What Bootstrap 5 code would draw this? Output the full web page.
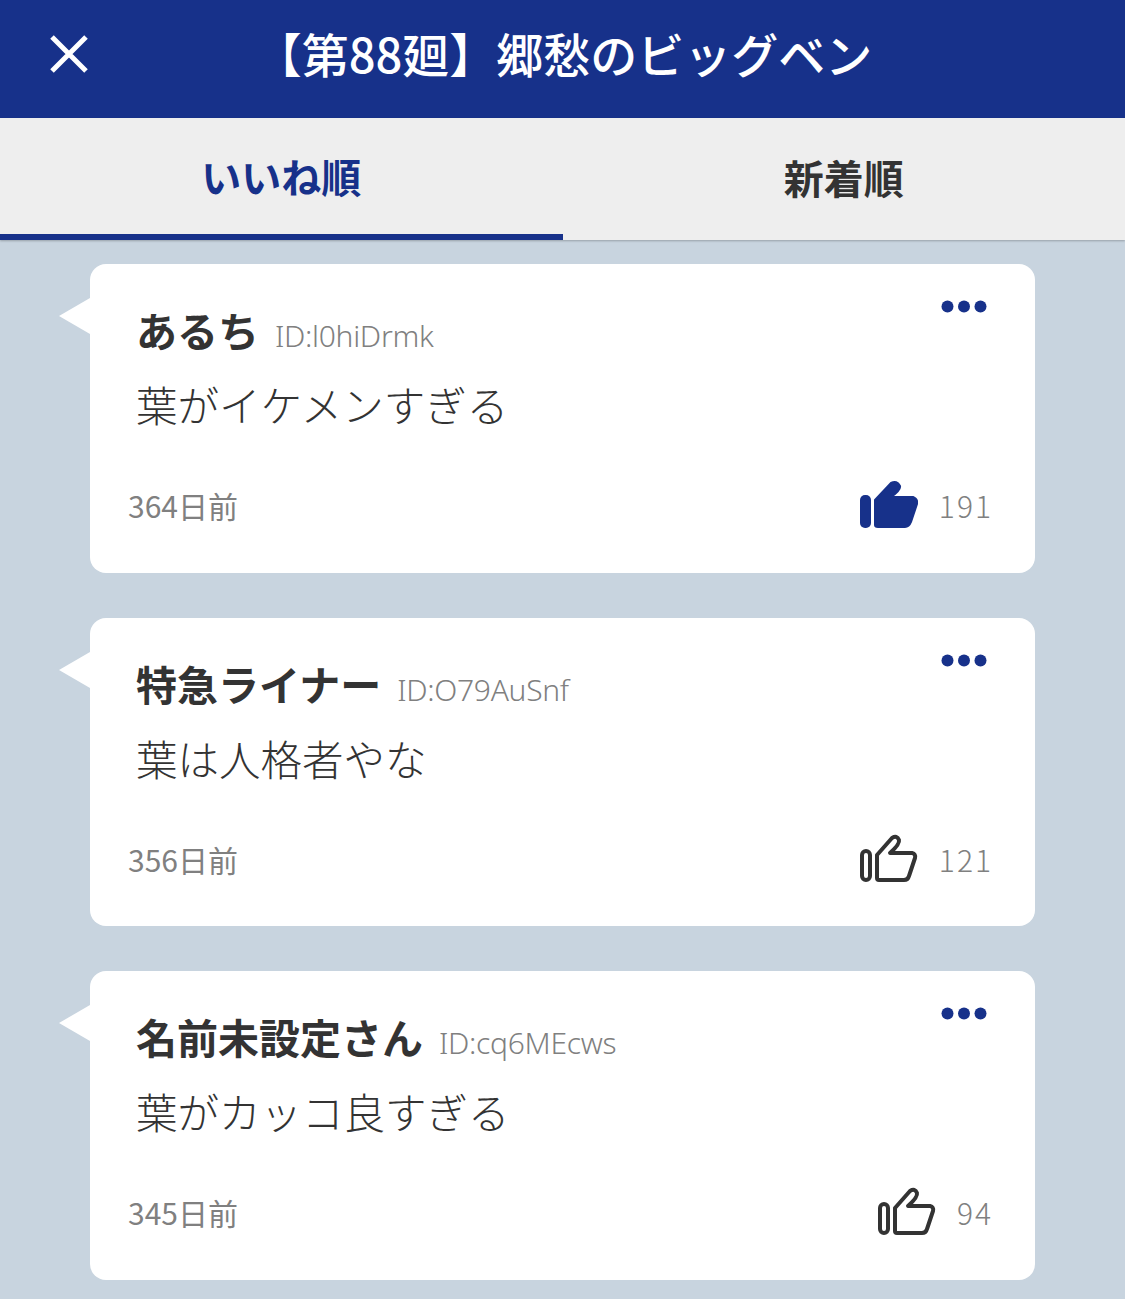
<!DOCTYPE html>
<html lang="ja">
  <head>
    <meta charset="UTF-8" />
    <meta name="viewport" content="width=device-width, initial-scale=1.0" />
    <title>コメント</title>
    <link href="https://cdn.jsdelivr.net/npm/bootstrap@5.3.0/dist/css/bootstrap.min.css" rel="stylesheet" />
    <style>
      body {
        background-color: #c8d4df;
        font-family: "Noto Sans CJK JP", "Noto Sans", sans-serif;
        color: #333;
        overflow: hidden;
      }
      .top-bar {
        height: 118px;
        background-color: #17318a;
        color: #fff;
      }
      .close-btn {
        left: 50px;
        top: 35px;
        width: 38px;
        height: 38px;
      }
      .top-title {
        font-size: 47px;
        font-weight: 500;
        line-height: 1;
        padding-left: 2px;
        padding-bottom: 14px;
      }
      .tab-row {
        height: 122px;
        margin-bottom: -2px;
        background-color: #eee;
        box-shadow: 0 1px 2px rgba(0, 0, 0, 0.25);
      }
      .tab-item {
        font-size: 40px;
        font-weight: 700;
        color: #333;
        padding-bottom: 4px;
      }
      .tab-item.active-tab {
        color: #17318a;
        border-bottom: 6px solid #17318a;
        padding-bottom: 0;
      }
      .comment-list {
        padding: 26px 90px 0;
        gap: 45px;
      }
      .comment-card {
        height: 308.5px;
        background-color: #fff;
        border-radius: 16px;
        padding: 30px 42px 0 46px;
      }
      .comment-card::before {
        content: "";
        position: absolute;
        left: -31px;
        top: 34px;
        border-top: 18px solid transparent;
        border-bottom: 18px solid transparent;
        border-right: 31px solid #fff;
      }
      .dots {
        right: 48px;
        top: 36px;
        width: 46px;
        height: 13px;
      }
      .user-name {
        font-size: 41px;
        font-weight: 700;
        line-height: 70px;
      }
      .user-id {
        font-size: 30px;
        font-family: "Noto Sans", sans-serif;
        font-weight: 300;
        color: #808080;
        margin-left: 16px;
        letter-spacing: -0.3px;
      }
      .comment-text {
        font-size: 41.5px;
        line-height: 60px;
        margin-top: 10px;
        color: #333;
        font-weight: 300;
      }
      .card-foot {
        margin-top: 46px;
        margin-left: -8px;
        color: #808080;
        font-size: 30px;
        line-height: 50px;
      }
      .like-count {
        margin-left: 21px;
        letter-spacing: 2px;
        font-weight: 300;
      }
      .thumb {
        width: 58px;
        height: 50px;
      }
    </style>
  </head>
  <body>
    <div class="top-bar position-relative d-flex align-items-center justify-content-center">
      <svg class="close-btn position-absolute" viewBox="0 0 38 38">
        <path d="M2 2 L36 36 M36 2 L2 36" stroke="#fff" stroke-width="5" fill="none" />
      </svg>
      <div class="top-title">【第88廻】郷愁のビッグベン</div>
    </div>

    <div class="tab-row d-flex position-relative">
      <div class="tab-item active-tab w-50 d-flex align-items-center justify-content-center">いいね順</div>
      <div class="tab-item w-50 d-flex align-items-center justify-content-center">新着順</div>
    </div>

    <div class="comment-list d-flex flex-column">
      <div class="comment-card position-relative">
        <svg class="dots position-absolute" viewBox="0 0 46 13" fill="#17318a">
          <circle cx="6.5" cy="6.5" r="6" /><circle cx="23" cy="6.5" r="6" /><circle cx="39.5" cy="6.5" r="6" />
        </svg>
        <div class="d-flex align-items-baseline">
          <span class="user-name">あるち</span><span class="user-id">ID:l0hiDrmk</span>
        </div>
        <div class="comment-text">葉がイケメンすぎる</div>
        <div class="card-foot d-flex align-items-center justify-content-between">
          <span>364日前</span>
          <span class="d-flex align-items-center">
            <svg class="thumb" viewBox="0 0 58 50">
              <rect x="0" y="15" width="11" height="33" rx="5" fill="#17318a" />
              <path d="M15 45 L15 20 L31 3 Q37 0 40 6 Q41 10 31 17 L53 17 Q58 19 57 24 L51 42 Q49 47 45 47 L18 47 Q15 47 15 45 Z" fill="#17318a" stroke="#17318a" stroke-width="2" stroke-linejoin="round" />
            </svg>
            <span class="like-count">191</span>
          </span>
        </div>
      </div>

      <div class="comment-card position-relative">
        <svg class="dots position-absolute" viewBox="0 0 46 13" fill="#17318a">
          <circle cx="6.5" cy="6.5" r="6" /><circle cx="23" cy="6.5" r="6" /><circle cx="39.5" cy="6.5" r="6" />
        </svg>
        <div class="d-flex align-items-baseline">
          <span class="user-name">特急ライナー</span><span class="user-id">ID:O79AuSnf</span>
        </div>
        <div class="comment-text">葉は人格者やな</div>
        <div class="card-foot d-flex align-items-center justify-content-between">
          <span>356日前</span>
          <span class="d-flex align-items-center">
            <svg class="thumb" viewBox="0 0 58 50" fill="none" stroke="#333" stroke-width="4" stroke-linejoin="round">
              <rect x="2" y="17" width="8" height="29" rx="4" />
              <path d="M17 44 L17 21 L32 4 Q37 1 39 6 Q40 10 30 19 L52 19 Q56 20 55 24 L49 42 Q48 46 44 46 L19 46 Q17 46 17 44 Z" />
            </svg>
            <span class="like-count">121</span>
          </span>
        </div>
      </div>

      <div class="comment-card position-relative">
        <svg class="dots position-absolute" viewBox="0 0 46 13" fill="#17318a">
          <circle cx="6.5" cy="6.5" r="6" /><circle cx="23" cy="6.5" r="6" /><circle cx="39.5" cy="6.5" r="6" />
        </svg>
        <div class="d-flex align-items-baseline">
          <span class="user-name">名前未設定さん</span><span class="user-id">ID:cq6MEcws</span>
        </div>
        <div class="comment-text">葉がカッコ良すぎる</div>
        <div class="card-foot d-flex align-items-center justify-content-between">
          <span>345日前</span>
          <span class="d-flex align-items-center">
            <svg class="thumb" viewBox="0 0 58 50" fill="none" stroke="#333" stroke-width="4" stroke-linejoin="round">
              <rect x="2" y="17" width="8" height="29" rx="4" />
              <path d="M17 44 L17 21 L32 4 Q37 1 39 6 Q40 10 30 19 L52 19 Q56 20 55 24 L49 42 Q48 46 44 46 L19 46 Q17 46 17 44 Z" />
            </svg>
            <span class="like-count">94</span>
          </span>
        </div>
      </div>
    </div>

    <script src="https://cdn.jsdelivr.net/npm/bootstrap@5.3.0/dist/js/bootstrap.bundle.min.js"></script>
  </body>
</html>
